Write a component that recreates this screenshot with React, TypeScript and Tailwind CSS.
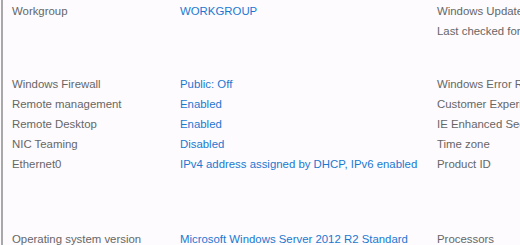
import React from 'react';

type Row = [string, string, string];

const Section = ({ rows, className }: { rows: Row[]; className?: string }) => (
  <div className={className}>
    {rows.map(([label, value, right], i) => (
      <div key={i} className="flex h-5 items-center whitespace-nowrap">
        <div className="w-[168px] shrink-0 text-[#666666]">{label}</div>
        <div className="w-[257px] shrink-0 text-[#1b78d0]">{value}</div>
        <div className="shrink-0 text-[#666666]">{right}</div>
      </div>
    ))}
  </div>
);

export default function App() {
  return (
    <div
      className="h-[245px] w-[520px] overflow-hidden bg-[#fdfbfe] text-[11.4px]"
      style={{ fontFamily: '"Liberation Sans", Arial, sans-serif' }}
    >
      <div className="ml-px h-full border-l-2 border-[#a8a8a8] pl-[9px]">
        <Section
          className="pt-[2px]"
          rows={[
            ['Workgroup', 'WORKGROUP', 'Windows Update'],
            ['', '', 'Last checked for updates'],
          ]}
        />
        <Section
          className="mt-[33px]"
          rows={[
            ['Windows Firewall', 'Public: Off', 'Windows Error Reporting'],
            ['Remote management', 'Enabled', 'Customer Experience'],
            ['Remote Desktop', 'Enabled', 'IE Enhanced Security'],
            ['NIC Teaming', 'Disabled', 'Time zone'],
            ['Ethernet0', 'IPv4 address assigned by DHCP, IPv6 enabled', 'Product ID'],
          ]}
        />
        <Section
          className="mt-[55px]"
          rows={[['Operating system version', 'Microsoft Windows Server 2012 R2 Standard', 'Processors']]}
        />
      </div>
    </div>
  );
}
